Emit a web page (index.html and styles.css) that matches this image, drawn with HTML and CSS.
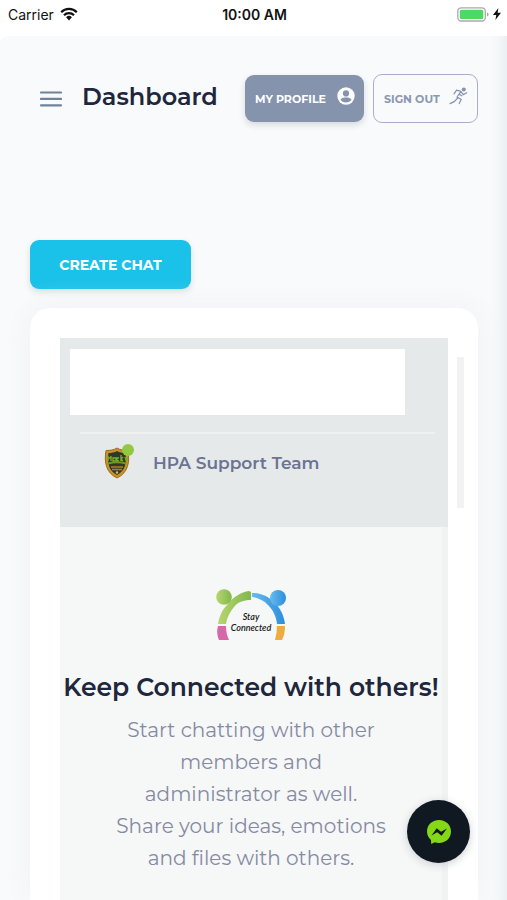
FILE: index.html
```html
<!DOCTYPE html>
<html lang="en">
<head>
<meta charset="utf-8">
<meta name="viewport" content="width=device-width, initial-scale=1">
<title>Dashboard</title>
<link rel="stylesheet" href="styles.css">
</head>
<body>
<div class="status">
  <div class="status-left">
    <span>Carrier</span>
    <svg width="18" height="14" viewBox="0 0 18 14" aria-hidden="true"><g fill="none" stroke="#111" stroke-width="2.2"><path d="M1.2 5.2a11 11 0 0 1 15.6 0"/><path d="M4 8.2a7 7 0 0 1 10 0"/></g><path d="M9 13.4 6.1 10.3a4.1 4.1 0 0 1 5.8 0z" fill="#111"/></svg>
  </div>
  <span class="time">10:00 AM</span>
  <div class="status-right">
    <svg width="32" height="15" viewBox="0 0 32 15" aria-hidden="true"><rect x=".8" y=".8" width="27.5" height="13.2" rx="3.5" fill="#fff" stroke="#aaa" stroke-width="1.3"/><rect x="2.8" y="2.8" width="23.5" height="9.2" rx="1.5" fill="#4cd964"/><path d="M30 5.2q1.6.8 1.6 2.2T30 9.6z" fill="#aaa"/></svg>
    <svg width="8" height="12" viewBox="0 0 8 12" aria-hidden="true"><path d="M5.4 0 0 7h3.3L2.4 12 8 4.8H4.6z" fill="#111"/></svg>
  </div>
</div>
<div class="app">
  <header class="header">
    <button class="menu" type="button" aria-label="Menu"><svg width="22" height="16" viewBox="0 0 22 16"><path d="M1 1.500h20M1 7.900h20M1 14.300h20" stroke="#71829c" stroke-width="2.200" stroke-linecap="round"/></svg></button>
    <h1>Dashboard</h1>
    <nav class="actions">
      <a class="btn profile" href="#profile"><span>MY PROFILE</span><svg width="18" height="18" viewBox="0 0 18 18"><circle cx="9" cy="9" r="8.7" fill="#fff"/><circle cx="9" cy="6.4" r="3.1" fill="#8593ad"/><path d="M3.4 12.6c1.2-1.5 2.8-2.1 5.6-2.1s4.4.6 5.6 2.1c-1.2 1.9-3.1 2.9-5.6 2.9s-4.4-1-5.6-2.9z" fill="#8593ad"/></svg></a>
      <a class="btn signout" href="#signout"><span>SIGN OUT</span><svg width="19" height="18" viewBox="0 0 19 18"><circle cx="14.8" cy="2.5" r="2" fill="#8592b0"/><path d="M5 6.800 7.600 3.200l4.400 1.200-4 5.600 4.200 2.600-2 4M12 4.600l2.200 3 3.600-1.800M8.600 11l-3 3.400L1 16.600M10.400 7.400l2.400 1.400" fill="none" stroke="#8592b0" stroke-width="1.200" stroke-linecap="round" stroke-linejoin="round"/></svg></a>
    </nav>
  </header>
  <button class="create" type="button">CREATE CHAT</button>
  <main class="card">
    <section class="contacts">
      <input class="search" type="text" aria-label="Search contacts">
      <hr>
      <a class="contact" href="#support">
        <span class="avatar">
          <svg width="28" height="32" viewBox="0 0 28 32" aria-hidden="true"><path d="M14 1c3 2 7 2.500 11 2.500C27 15 25 26 14 31 3 26 1 15 3 3.500 7 3.500 11 3 14 1z" fill="#c79227" stroke="#a4691b"/><path d="M14 4c2.500 1.500 5.500 2 8.500 2C24 16 22 24 14 28 6 24 4 16 5.500 6c3 0 6-.5 8.500-2z" fill="#30382a"/><path d="M5 9v5M5 12l3-2M8 9v5M10 11h3v3h-3zM16 11h-2v3h2M18 8v6M20 10l-2 2 2 2M22 10l1 3 2-3" stroke="#79ad29" stroke-width="1.400" fill="none"/><path d="M5 16.500q9-2.500 18 0" stroke="#6f9726" stroke-width="2" fill="none"/><path d="M8 20h12M9 22.500h10" stroke="#b77d23" stroke-width="1.500"/><circle cx="14" cy="25.500" r="1.300" fill="#d6b64d"/></svg>
          <span class="online"></span>
        </span>
        <span>HPA Support Team</span>
      </a>
    </section>
    <section class="welcome">
      <svg class="logo" width="72" height="54" viewBox="0 0 72 54" role="img" aria-label="Stay Connected">
        <defs>
          <linearGradient id="green"><stop stop-color="#b6d66f"/><stop offset="1" stop-color="#82b84b"/></linearGradient>
          <linearGradient id="blue"><stop stop-color="#68bbed"/><stop offset="1" stop-color="#2c8edc"/></linearGradient>
        </defs>
        <path d="M3 36C4 29 7 22 12 17 18 9 26 4 34 3l2 1v8c-8 0-13 2-17 7-4 5-7 10-8 17z" fill="url(#green)"/>
        <path d="M37 5c10 0 17 4 23 10 6 6 9 13 10 21h-8c-1-8-4-14-9-19-4-4-9-7-16-8z" fill="url(#blue)"/>
        <circle cx="9" cy="9" r="7.800" fill="url(#green)"/><circle cx="63" cy="10" r="8" fill="url(#blue)"/>
        <path d="M3 38h8q0 8 3 14H4Q1 45 3 38z" fill="#da66aa"/><path d="M62 38h8q0 8-3 14h-7q2-7 2-14z" fill="#efaa42"/>
        <text x="36" y="32">Stay</text><text x="36" y="43">Connected</text>
      </svg>
      <h2>Keep Connected with others!</h2>
      <p>Start chatting with other<br>members and<br>administrator as well.<br>Share your ideas, emotions<br>and files with others.</p>
    </section>
    <span class="scroll-thumb"></span>
  </main>
</div>
<button class="messenger" type="button" aria-label="Open chat"><svg width="26" height="26" viewBox="0 0 26 26"><path d="M13 1C6 1 1 6 1 12.500c0 3.500 1.500 6.500 4 8.500l.2 4 3.600-1.800c1.300.5 2.700.8 4.200.8 7 0 12-5 12-11.500S20 1 13 1z" fill="#84d818"/><path d="m5.500 16.500 5.200-7.300 4.300 3.600 6-3.300-5.400 7.200-4.400-3.500z" fill="#101821"/></svg></button>
</body>
</html>
```

FILE: styles.css
```css
* { box-sizing: border-box; }
body {
  margin: 0;
  min-height: 100vh;
  display: flex;
  flex-direction: column;
  background: #fff;
  color: #20263b;
  font-family: Montserrat, Inter, sans-serif;
}
button { border: 0; padding: 0; font: inherit; cursor: pointer; }
a { color: inherit; text-decoration: none; }
svg { display: block; flex: none; }

.status {
  display: grid;
  grid-template-columns: 1fr auto 1fr;
  align-items: center;
  height: 36px;
  padding: 0 6px 8px 8px;
  color: #111;
  font-family: Inter, sans-serif;
  font-size: 14px;
}
.status-left, .status-right { display: flex; align-items: center; gap: 6px; }
.status-right { justify-content: flex-end; gap: 4px; }
.time { font-weight: 600; }

.app {
  flex: 1;
  display: flex;
  flex-direction: column;
  align-items: flex-start;
  padding: 38px 29px 0 30px;
  border-radius: 8px 0 0 0;
  background: #f8fafb;
  box-shadow: inset -16px 0 14px -12px #e8ebef;
}
.header { display: flex; align-items: center; width: 100%; height: 49px; padding-left: 10px; }
.menu { background: none; }
h1 { margin: 0 0 4px 20px; font-size: 24px; line-height: 32px; font-weight: 600; }
.actions { display: flex; align-items: center; gap: 9px; margin-left: auto; }
.btn {
  display: flex;
  align-items: center;
  justify-content: space-between;
  border-radius: 9px;
  padding: 0 9px 0 10px;
  font-size: 11px;
  font-weight: 700;
  white-space: nowrap;
}
.btn svg { margin-bottom: 5px; }
.profile { width: 119px; height: 47px; background: #8593ad; color: #fff; box-shadow: 0 3px 6px #d5d9e0; }
.signout { width: 105px; height: 49px; border: 1px solid #aaaecb; color: #8c98b1; }

.create {
  width: 161px;
  height: 49px;
  margin: 117px 0 19px;
  border-radius: 9px;
  background: #1ac1e8;
  color: #fff;
  font-size: 14px;
  font-weight: 700;
  box-shadow: 0 3px 6px #d9dee2;
}
.card {
  position: relative;
  flex: 1;
  display: flex;
  flex-direction: column;
  align-self: stretch;
  padding: 30px 30px 0;
  border-radius: 20px 20px 0 0;
  background: #fff;
  box-shadow: 0 0 28px #eff1f4;
}
.contacts { height: 189px; padding: 11px 10px; background: #e5e9e9; }
.search { display: block; width: calc(100% - 33px); height: 66px; padding: 0 10px; border: 0; background: #fff; font: inherit; }
hr { height: 2px; margin: 17px 3px 11px 10px; border: 0; background: #eff1f1; }
.contact { display: flex; align-items: center; gap: 20px; padding-left: 33px; color: #6c7394; font-size: 17px; line-height: 36px; font-weight: 600; }
.avatar { position: relative; width: 30px; }
.online { position: absolute; top: -3px; right: -1px; width: 12px; height: 12px; border-radius: 50%; background: #92c842; }
.welcome {
  flex: 1;
  display: flex;
  flex-direction: column;
  align-items: center;
  padding: 61px 0 0;
  border-right: 6px solid #f1f2f2;
  background: #f6f7f7;
  text-align: center;
}
.logo text { fill: #161616; font: italic 600 9px Lato, sans-serif; text-anchor: middle; }
h2 { margin: 29px 0 11px; font-size: 25px; line-height: 32px; font-weight: 600; white-space: nowrap; }
p { margin: 0; color: #858aa4; font-size: 20px; line-height: 32px; }
.scroll-thumb { position: absolute; top: 49px; right: 14px; width: 7px; height: 151px; background: #f2f2f3; }
.messenger {
  position: fixed;
  right: 37px;
  bottom: 37px;
  display: grid;
  place-items: center;
  width: 63px;
  height: 63px;
  border-radius: 50%;
  background: #101821;
  box-shadow: 0 2px 8px #ccd0d2;
}
```
